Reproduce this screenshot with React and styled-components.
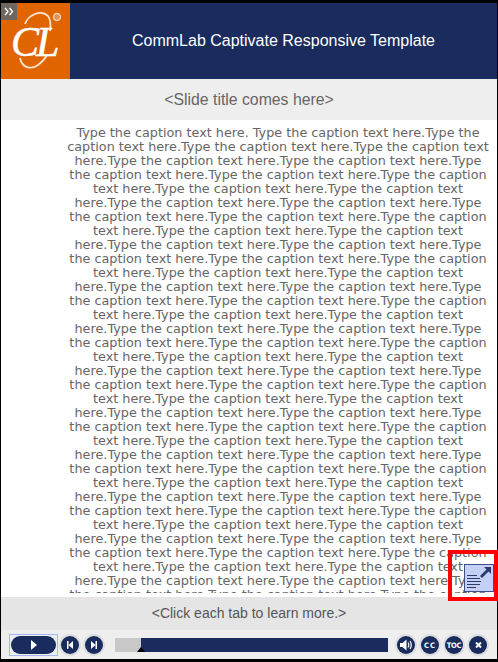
import React from "react";
import styled, { createGlobalStyle } from "styled-components";

const navy = "#1a2c5e";

const Global = createGlobalStyle`
  html, body {
    margin: 0;
    padding: 0;
    background: #000;
  }
`;

const Player = styled.div`
  position: relative;
  box-sizing: border-box;
  width: 498px;
  height: 662px;
  padding: 3px 1px;
  background: #000;
  display: flex;
  flex-direction: column;
  font-family: "Liberation Sans", Arial, sans-serif;
  overflow: hidden;
`;

const Header = styled.div`
  height: 76px;
  flex: none;
  display: flex;
  background: ${navy};
`;

const LogoBox = styled.div`
  position: relative;
  width: 69px;
  flex: none;
  background: #e06400;
`;

const Toggle = styled.div`
  position: absolute;
  left: 0;
  top: 0;
  width: 16px;
  height: 17px;
  background: #6f675f;
`;

const HeaderTitle = styled.div`
  flex: 1;
  padding-left: 62px;
  line-height: 76px;
  color: #fff;
  font-size: 16px;
`;

const SlideTitle = styled.div`
  height: 41px;
  flex: none;
  background: #eeeeee;
  color: #666;
  font-size: 15.8px;
  line-height: 41px;
  text-align: center;
`;

const Content = styled.div`
  flex: 1;
  min-height: 0;
  background: #fff;
  padding-bottom: 4px;
  display: flex;
`;

const Scroller = styled.div`
  flex: 1;
  overflow: hidden;
  padding: 6px 4px 0 62px;
`;

const Caption = styled.p`
  margin: 0;
  color: #666;
  font-family: "DejaVu Sans", Verdana, sans-serif;
  font-size: 12.8px;
  line-height: 14px;
  text-align: center;
`;

const Instruction = styled.div`
  height: 33px;
  flex: none;
  background: #e5e5e5;
  color: #555;
  font-size: 14px;
  line-height: 33px;
  text-align: center;
`;

const Controls = styled.div`
  box-sizing: border-box;
  height: 29px;
  flex: none;
  display: flex;
  align-items: center;
  padding: 1px 0 0 8px;
  background: #eeeeee;
`;

const PlayFrame = styled.div`
  box-sizing: border-box;
  width: 49px;
  height: 22px;
  padding: 1px;
  border: 1px solid #a6b6f5;
  flex: none;
`;

const PlayPill = styled.div`
  height: 100%;
  border-radius: 10px;
  background: ${navy};
  display: flex;
  align-items: center;
  justify-content: center;
`;

const RoundButton = styled.div`
  width: 18px;
  height: 18px;
  margin: 0 3px;
  flex: none;
  border-radius: 50%;
  background: ${navy};
  box-shadow: 0 0 0 2px #dedede;
  color: #fff;
  display: flex;
  align-items: center;
  justify-content: center;
  font-family: "DejaVu Sans Condensed", "DejaVu Sans", sans-serif;
  font-size: 7.5px;
  font-weight: 700;
  letter-spacing: ${(p) => p.$spacing || 0}px;
`;

const Progress = styled.div`
  position: relative;
  width: 273px;
  height: 14px;
  margin: 0 6px 0 9px;
  flex: none;
  background: ${navy};
`;

const Played = styled.div`
  height: 100%;
  background: #c8c8c8;
`;

const Marker = styled.div`
  position: absolute;
  top: 9px;
  width: 0;
  height: 0;
  border-left: 4px solid transparent;
  border-right: 4px solid transparent;
  border-bottom: 5px solid #000;
  transform: translateX(-4px);
`;

const ExpandFrame = styled.div`
  position: absolute;
  left: 448px;
  top: 550px;
  box-sizing: border-box;
  width: 50px;
  height: 51px;
  border: 4px solid #f00;
  padding: 10px 0 0 12px;
`;

const ExpandButton = styled.div`
  box-sizing: border-box;
  width: 30px;
  height: 28px;
  background: #c5d0f7;
  border: 1px solid #3c4f8a;
`;

const caption =
  "Type the caption text here. " +
  Array(79).fill("Type the caption text here.").join("");

const played = 26;

const App = () => (
  <Player>
    <Global />
    <Header>
      <LogoBox>
        <svg width="69" height="76" viewBox="0 0 69 76">
          <path d="M24 21C27 12 40 6 47 13C50 17 50 22 49 28" fill="none" stroke="#fbe3cc" strokeWidth="1.8" />
          <path d="M19 55C21 65 30 67 37 62C41 59 44 56 46 52" fill="none" stroke="#fbe3cc" strokeWidth="1.8" />
          <text x="10" y="53" fontFamily="Liberation Serif" fontStyle="italic" fontSize="42" letterSpacing="-3" fill="#fff" stroke="#fff" strokeWidth="0.5">CL</text>
          <circle cx="56" cy="14" r="3.5" fill="#e8905a" stroke="#f8cfae" strokeWidth="1.5" />
        </svg>
        <Toggle>
          <svg width="16" height="17" viewBox="0 0 16 17">
            <path d="M4 5L7 8.5L4 12M8.5 5L11.5 8.5L8.5 12" fill="none" stroke="#fff" strokeWidth="1.4" />
          </svg>
        </Toggle>
      </LogoBox>
      <HeaderTitle>CommLab Captivate Responsive Template</HeaderTitle>
    </Header>
    <SlideTitle>&lt;Slide title comes here&gt;</SlideTitle>
    <Content>
      <Scroller>
        <Caption>{caption}</Caption>
      </Scroller>
    </Content>
    <Instruction>&lt;Click each tab to learn more.&gt;</Instruction>
    <Controls>
      <PlayFrame>
        <PlayPill>
          <svg width="6" height="10" viewBox="0 0 6 10"><path d="M0 0 L6 5 L0 10 Z" fill="#fff" /></svg>
        </PlayPill>
      </PlayFrame>
      <RoundButton>
        <svg width="6" height="8" viewBox="0 0 6 8"><path d="M0 0H1.5V8H0ZM6 0V8L1.5 4Z" fill="#fff" /></svg>
      </RoundButton>
      <RoundButton>
        <svg width="6" height="8" viewBox="0 0 6 8"><path d="M6 0H4.5V8H6ZM0 0V8L4.5 4Z" fill="#fff" /></svg>
      </RoundButton>
      <Progress>
        <Played style={{ width: played }} />
        <Marker style={{ left: played }} />
      </Progress>
      <RoundButton>
        <svg width="12" height="12" viewBox="0 0 12 12">
          <path d="M0 4H2.5L6.5 0.5V11.5L2.5 8H0Z" fill="#fff" />
          <path d="M8 3.5C9 5 9 7 8 8.5M10 2C11.6 4.5 11.6 7.5 10 10" fill="none" stroke="#fff" strokeWidth="1.2" />
        </svg>
      </RoundButton>
      <RoundButton $spacing={1}>CC</RoundButton>
      <RoundButton $spacing={-0.3}>TOC</RoundButton>
      <RoundButton>
        <svg width="7" height="6" viewBox="0 0 7 6"><path d="M1 0.5L6 5.5M6 0.5L1 5.5" stroke="#fff" strokeWidth="2" /></svg>
      </RoundButton>
    </Controls>
    <ExpandFrame>
      <ExpandButton>
        <svg width="28" height="26" viewBox="0 0 28 26">
          <path d="M16 12L23 5" fill="none" stroke="#2b3a6b" strokeWidth="2.8" />
          <path d="M19 2H26V9Z" fill="#2b3a6b" />
          <path d="M2 10.5H12M2 13.5H15M2 16.5H16M2 19.5H15M2 22.5H11" stroke="#2b3a6b" strokeWidth="1.2" />
        </svg>
      </ExpandButton>
    </ExpandFrame>
  </Player>
);

export default App;
